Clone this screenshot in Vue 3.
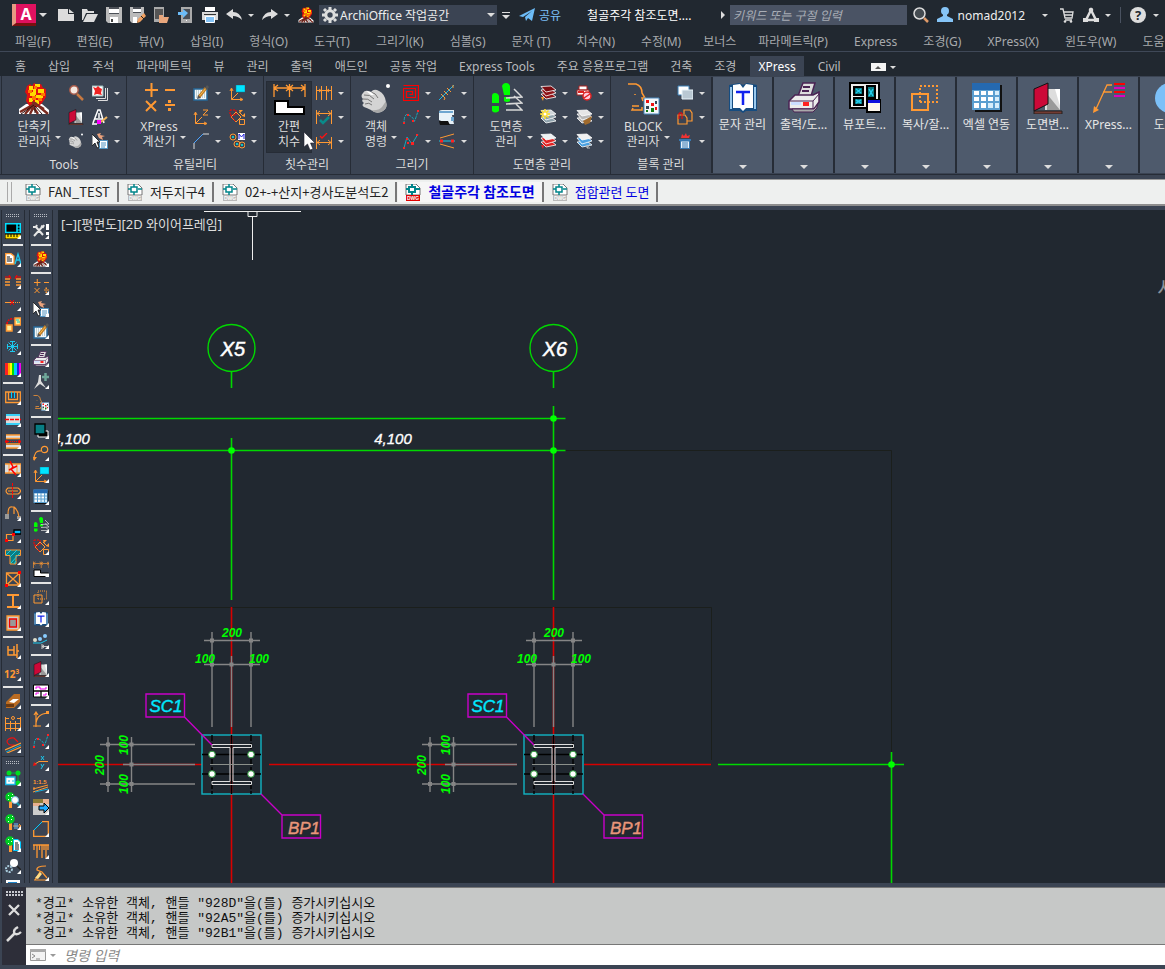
<script setup>
import { ref } from 'vue'

const fire = `
  <path fill="#fff" d="M1 31V26L8 21 24 21 31 27V31Z"/>
  <path fill="#e01010" d="M9 3 12 1 14 3 16 0 20 2 23 1 25 5 28 6 28 14 24 20 20 24H12L8 18 9 12 7 9Z"/>
  <path fill="#fd0" d="M11 3h4v4h-4zM17 1h5v3h-5zM20 6h6v4h-6zM12 9h5v4h-5zM18 12h7v3h-7zM11 15h4v4h-4zM17 17h4v4h-4zM15 6h3v6h-3z"/>
  <path fill="#f70" d="M10 7h4v3h-4zM16 3h3v3h-3zM23 10h4v3h-4zM14 13h4v4h-4zM20 15h4v3h-4z"/>
  <path fill="none" stroke="#7b2b20" stroke-width="2.4" d="M2 29 18 20M7 31 15 22M12 31 17 21M20 31 14 22M30 31 17 20M26 26 14 19"/>
  <path fill="none" stroke="#301010" d="M3 31 16 22M24 31 17 23M17 30V23"/>`
const calc = `<path fill="none" stroke="#f93" stroke-width="2" d="M2 7H15M8.5 0V14M22 7H32M3 18 13 28M13 18 3 28M22 22H32"/><path fill="#f93" d="M25 17h3v3h-3zM25 25h3v3h-3z"/>`
const pencil = `<path fill="#f4f8fb" stroke="#27699b" stroke-width="1.5" d="M1 4H14V15H1Z"/><path fill="none" stroke="#8aa" stroke-dasharray="1 1" d="M3 6H12M3 8H12M3 10H12M3 12H12"/><path stroke="#c27b22" stroke-width="3" d="M6 12 13 3"/><path stroke="#f2bd55" d="M6.5 11 13 3"/><path fill="#555" d="M4 14 5 10 8 13ZM12 3 14 0 16 2 14 5Z"/>`
const cursorList = `<path fill="#eba27c" d="M5 1 9 0 8 2 13 3 10 4 11 7 7 5Z"/><path fill="#fff" stroke="#4f93c2" d="M7.5 7.5H15.5V15.5H7.500Z"/><path stroke="#4f93c2" d="M9 10H14M9 12H14M9 14H13"/><path fill="#fff" stroke="#111" stroke-width=".8" d="M0 1V13L3 10 5 15 7 14 5 9H8Z"/>`
const door = `<path fill="#ddd" d="M13 7H28V28H13Z"/><path fill="#999" d="M28 28 15 12V28Z"/><path fill="#fff" d="M23 7H28V24Z"/><path fill="#733b33" stroke="#222" d="M2 29H30V32H2Z"/><path fill="#cc0838" stroke="#111" d="M2 7 16 1V22L2 29Z"/>`
const table = `<path fill="#111" d="M4 3H31V30H4Z"/><path fill="#5b9fd0" d="M1 1H29V28H1Z"/><path fill="#2569b0" d="M1 1H29V8H1Z"/><path fill="#fff" d="M3 9h5v4H3zM10 9h5v4h-5zM17 9h5v4h-5zM3 15h5v4H3zM10 15h5v4h-5zM17 15h5v4h-5zM3 21h5v5H3zM10 21h5v5h-5z"/><path fill="#d5edfb" d="M24 9h4v4h-4zM24 15h4v4h-4zM17 21h5v5h-5zM24 21h4v5h-4z"/>`
const textBook = `<path fill="#154c80" d="M2 3 12 1 16 3 20 1 30 3V29H19L16 31 13 29H2Z"/><path fill="#9ac9ee" d="M3 5h2v22H3zM27 5h2v22h-2z"/><path fill="#fff" d="M6 3 13 2 16 6 19 2 26 3V26H19L16 29 13 26H6Z"/><path stroke="#12e" stroke-width="2.5" fill="none" d="M9 10H23M16 10V23"/>`
const copyBox = `<path fill="none" stroke="#f93" stroke-width="2" d="M2 12H18V28H2Z"/><path fill="none" stroke="#f93" stroke-width="2" stroke-dasharray="2 2" d="M10 20V4H27V20H10"/>`
const printer = `<path fill="#ddd" stroke="#4b2354" stroke-width="1.5" d="M10 14 15 1H27L23 14Z"/><path fill="none" stroke="#4b2354" stroke-width="2" d="M15 5H22M14 9H21"/><path fill="#ececec" stroke="#4b2354" stroke-width="1.5" d="M1 19 7 13H25L31 10V20L26 27H1Z"/><path fill="#aaa" stroke="#4b2354" d="M4 27H26L29 23V26L25 30H6Z"/><path fill="none" stroke="#4b2354" d="M1 19H25L31 12M25 19V27"/><path fill="#cdf" d="M3 20h10v3H3z"/><path fill="#f22" d="M15 20h6v4h-6z"/>`
const axes = `<path fill="none" stroke="#f93" d="M2.5 4V14.5H13M2.5 14.5 9 8M1 6 2.5 3 4 6M11 13 14 14.5 11 16"/><path fill="#00e5ff" stroke="#087d9a" stroke-width=".5" d="M7 0H16V7H7Z"/>`
const diamond = `<path fill="none" stroke="#f93" d="M2 8 7 3 12 8 7 13ZM10.5 10.5H15.5V15.5H10.5ZM10 3 14 7"/><path fill="#f93" d="M10 1h4l-3 3zM16 8 16 4 13 7z"/><path fill="none" stroke="#f00" stroke-dasharray="2 1" d="M1 1H7V6H1ZM1 6 7 13"/>`
const feet = `<path fill="#0f0" d="M2 13Q2 10 5 10T9 13V20H2ZM2 23H9V28Q5 31 2 28ZM12 3Q13 0 16 0T20 3V12H14ZM14 14H20V18Q17 20 14 18Z"/><path fill="none" stroke="#d8d8d8" stroke-width="1.5" d="M24 6 32 14 16 15M24 13 32 20 16 21M26 21 32 27H16"/>`
const bigDim = `<path fill="none" stroke="#f93" stroke-width="1.3" d="M1 1V14M32 1V14M16.5 1V14M1 5H32M5 2 1 5 5 8M28 2 32 5 28 8M13 2 16.5 5 13 8M20 2 16.5 5 20 8"/><path fill="#fff" stroke="#000" stroke-width="2" d="M2 18H15V24H31V31H2Z"/>`
const face = `<path fill="none" stroke="#f93" stroke-width="1.5" d="M1 1H9Q15 3 15 10L18 15H15L16 18M15 24V27H5L6 25M5 23H12M8 11V12"/><path fill="#f4f7fa" stroke="#4c8bc0" d="M17 15H32V31H17Z"/><path fill="#e11" d="M19 17h3v3h-3zM24 20h3v3h-3zM28 24h2v3h-2z"/><path fill="#345" d="M19 23h3v3h-3zM28 18h2v3h-2z"/><path fill="#171" d="M24 25h3v4h-3zM19 27h2v2h-2z"/>`
const hand = `<path fill="#d4d4d4" d="M3 10Q5 6 11 9 14 5 19 8 25 11 26 19 28 25 23 28 17 32 11 27 7 25 4 24 1 22 4 20 1 18 3 16 0 13 3 10Z"/><path fill="#a8a8a8" d="M26 18Q28 25 23 28 17 32 11 27 18 28 22 24Z"/><path fill="none" stroke="#777" d="M4 12Q10 11 14 16M3 16Q8 15 12 19M5 21Q9 19 12 22M11 9Q16 10 18 15"/><path fill="#fff" d="M6 8 11 9 14 12 11 12Z"/><circle cx="28" cy="3" r="2" fill="#fff"/>`
const miniDim = `<path fill="none" stroke="#f93" d="M.5 1V15M15.5 1V15M1 4.5H15M4 2 1 4.5 4 7M12 2 15 4.5 12 7"/>`
const half = (s) => `<g transform="scale(.5)">${s}</g>`
const spline = `<path fill="none" stroke="#19a8b8" stroke-dasharray="3 1" d="M1 15Q1 3 6 6T11 12 15 2"/><path fill="#f22" d="M0 13h2v2H0zM4 5h2v2H4zM9 11h2v2H9zM14 1h2v2h-2z"/>`
const tree = `<path fill="#f93" d="M4 8h3v8H4z"/><circle cx="5" cy="5" r="4.7" fill="#0c2"/><path fill="#fff" d="M3 3h1v1H3zM6 5h1v1H6zM3 7h1v1H3zM7 2h1v1H7z"/>`
const sheets = (a, b) => `<path fill="${b}" stroke="#fff" stroke-width=".8" d="M1 9 11 8 16 12 6 14Z"/><path fill="${b}" stroke="#fff" stroke-width=".8" d="M1 5 11 4 16 8 6 11Z"/><path fill="${a}" stroke="#fff" stroke-width=".8" d="M1 1.5 11 1 16 5 6 7Z"/>`
const dwg = (c, on) => `<path fill="#fff" stroke="#555" stroke-width=".8" d="M1 0H11L15 4V11H1Z"/><path fill="none" stroke="#00858b" stroke-width="${on ? 2 : 1.5}" d="M1 5H4M11 5H15M7 0V3M7 8V11M4 3H10V8H4Z"/><path fill="${c}" d="M1 11H15V17H1Z"/><text x="8" y="16" fill="#fff" font-size="5" font-weight="700" text-anchor="middle" font-family="Liberation Sans">DWG</text>`

const icons = {
  fire: half(fire),
  calc: half(calc),
  door: half(door),
  table: half(table),
  textBook: half(textBook),
  copyBox: half(copyBox),
  printer: half(printer),
  feet: half(feet),
  bigDim: half(bigDim),
  face: half(face),
  hand: half(hand),
  pencil,
  cursorList,
  axes,
  diamond,
  spline,
  new: `<path fill="#dcdcdc" d="M0 2H10V7H16V14H0Z"/><path fill="#dcdcdc" d="M11 2 16 6H11Z"/>`,
  open: `<path fill="#dcdcdc" d="M0 2H5L6 4H12V6H4L1 13H0Z"/><path fill="#dcdcdc" d="M5 7H16L12 15H1Z"/>`,
  save: `<path fill="#bbb" d="M0 0H16V16H2L0 14Z"/><path fill="#4d5158" d="M3 0H13V7H3Z"/><path fill="#fff" d="M3 2H13V6H3ZM4 10H12V16H4Z"/><path fill="#444" d="M5 12h2v3H5z"/>`,
  saveAs: `<path fill="#bbb" d="M0 0H14V7L6 16H2L0 14Z"/><path fill="#4d5158" d="M3 0H11V6H3Z"/><path fill="#fff" d="M3 2H11V5H3ZM3 10H7V16H3Z"/><path fill="#f0a060" d="M7 16 8 12 14 6 16 9 10 15Z"/><path stroke="#222" fill="none" d="M11 9 14 12"/>`,
  openWeb: `<path fill="#aaa" d="M0 0H10V15H0Z"/><path fill="#555" d="M1 2H9V12H1Z"/><path fill="#e9a77d" d="M5 8H9V10H15L13 16H5Z"/>`,
  saveWeb: `<path fill="#aaa" d="M3 0H14V16H3Z"/><path fill="#4a4f57" d="M5 2H12V12H5Z"/><path fill="#6cbcf8" d="M0 5H5V2L10 6 5 11V8H0Z"/><path fill="#fff" d="M8 13h1v1H8z"/>`,
  print: `<path fill="#fff" d="M3 0H13V4H3Z"/><path fill="#d9d9d9" d="M0 5H16V13H0Z"/><path fill="#333" d="M2 7H14V8H2Z"/><path fill="#85c4f7" stroke="#fff" d="M3.5 9.5H12.5V15.5H3.5Z"/>`,
  undo: `<path fill="#ddd" d="M0 7 7 2V5Q14 5 16 13 12 9 7 9V12Z"/>`,
  redo: `<path fill="#ddd" d="M16 7 9 2V5Q2 5 0 13 4 9 9 9V12Z"/>`,
  gear: `<circle cx="8" cy="8" r="4.2" fill="none" stroke="#ddd" stroke-width="3"/><path stroke="#ddd" stroke-width="3" d="M8 0V3M8 13V16M0 8H3M13 8H16M2 2 4 4M12 12 14 14M14 2 12 4M4 12 2 14"/>`,
  plane: `<path fill="#6cbcf8" d="M0 9 16 1 13 14 9 11 7 14 6 10 13 4 4 10Z"/>`,
  find: `<circle cx="6.5" cy="6.5" r="5.5" fill="#444b51" stroke="#ddd" stroke-width="1.5"/><path stroke="#df9a68" stroke-width="2.5" d="M11 11 15 15"/>`,
  user: `<circle cx="8" cy="4" r="4" fill="#85c4f7"/><path fill="#85c4f7" d="M6 7H10V9L16 12V15H0V12L6 9Z"/>`,
  cart: `<path fill="none" stroke="#ddd" stroke-width="1.3" d="M1 2H4L6 11H13L14 5H5M5 8H14M6 13H13"/><circle cx="6" cy="14.5" r="1.3" fill="#ddd"/><circle cx="12" cy="14.5" r="1.3" fill="#ddd"/>`,
  apps: `<path fill="none" stroke="#ddd" stroke-width="2.5" d="M8 3 3 13H13Z"/><circle cx="8" cy="3" r="2.3" fill="#ddd"/><path fill="#ddd" d="M0 11h5v4H0zM11 11h5v4h-5z"/>`,
  help: `<circle cx="8" cy="8" r="8" fill="#ddd"/><text x="8" y="12.5" text-anchor="middle" font-family="Noto Sans" font-weight="700" font-size="13" fill="#212830">?</text>`,
  lens: `<circle cx="6" cy="5" r="4.2" fill="#f4e8e0" stroke="#a75a4a" stroke-width="1.5"/><path stroke="#c87941" stroke-width="2.5" d="M9 9 15 15"/>`,
  stack: `<path fill="none" stroke="#ddd" d="M6 15.5H15.5V3M4 13.5H13.5V3"/><path fill="#fff" stroke="#9bb" d="M0 1H11V11H0Z"/><path fill="#e22" d="M1 2 4 3 6 1 8 3 10 4 9 8 10 10 5 9 2 10 3 6Z"/>`,
  stamp: `<path fill="none" stroke="#fff" stroke-width="1.5" d="M1 14 6 1H8L12 14M3 10H11M0 15H5M7 4V9"/><path fill="none" stroke="#f0b35b" stroke-width="2" d="M15 8 9 13"/><path fill="#f0f" d="M5 11h4v4H5z"/>`,
  zAxes: `<path fill="none" stroke="#f93" d="M2.5 4V14.5H13M2.5 14.5 9 8M1 6 2.5 3 4 6M11 13 14 14.5 11 16M10 1H15L10 6H15"/>`,
  chamfer: `<path fill="none" stroke="#ddd" d="M1 16V10M10 1H16"/><path stroke="#4aa3ff" fill="none" d="M1 10 10 1"/>`,
  match: `<g fill="none" stroke="#f93"><circle cx="4" cy="4" r="3"/><circle cx="8" cy="11" r="3"/><circle cx="13" cy="12" r="3"/></g><path stroke="#0ee" d="M3 4H5M4 3V5M7 11H9M8 10V12M12 12H14M13 11V13"/><path fill="#fff" d="M9 0h7v7H9z"/><path fill="none" stroke="#22d" d="M10 6V1L12.5 4 15 1V6"/>`,
  dim3: `<path fill="none" stroke="#f93" d="M.5 1V15M5.5 1V15M10.500 1V15M15.5 1V15M1 5.5H15M3 4 5 5.5 3 7M13 4 11 5.5 13 7"/>`,
  dimOk: `${miniDim}<path fill="none" stroke="#0a8a8a" stroke-width="2.5" d="M4 11 7 14 13 8"/>`,
  dimRed: `<path fill="none" stroke="#f93" d="M.5 4V16M15.5 4V16M1 9.5H15M4 7 1 9.5 4 12M12 7 15 9.5 12 12"/><path fill="none" stroke="#f11" stroke-width="1.3" d="M4 3 6 5 11 0"/>`,
  maze: `<path fill="none" stroke="#f00" stroke-width="1.2" d="M.5.5H15.500V15.500H.5V3.500H12.500V12.500H3.500V6.500H9.500V9.500H6.500"/>`,
  trimX: `<path stroke="#19b8e8" d="M0 15 15 0"/><path stroke="#f93" d="M2 9 6 13M5 6 9 10M8 3 12 7M6 13 5 15M14 0V3"/>`,
  scroll: `<path fill="#e8f2f8" d="M0 3Q0 1 3 1H15V6H13L14 11 15 15H9L0 11Z"/><path fill="#111" d="M0 12H9L11 16H1Z"/><path fill="#6ea6d0" d="M0 2H14V4H0ZM12 8h3v4h-3z"/>`,
  splineB: `<path fill="none" stroke="#19a8b8" d="M1 15 4 4 9 11 15 1"/><path fill="#f22" d="M0 14h2v2H0zM3 5h2v2H3zM8 9h3v3H8zM13 1h2v2h-2zM4 9h2v2H4z"/>`,
  wedge: `<path fill="none" stroke="#f93" d="M1 5 15 1M1 11 15 15"/><path stroke="#19c8e8" d="M0 8H16"/><path fill="#f22" d="M1 6.5h3v3H1zM12 6.5h3v3h-3z"/>`,
  layerRed: sheets('#7d0d12', '#8f1418') + `<path fill="#f93" d="M1 12h3l-1 4z"/>`,
  layerRed2: sheets('#eef2f4', '#e22222') + `<path fill="#e22" d="M1 12h3l-1 4z"/>`,
  layerSun: sheets('#cfd6da', '#8fa3ad') + `<path stroke="#fd2" stroke-width="1.5" d="M5 0V10M0 5H10M1.500 1.500 8.500 8.500M8.500 1.500 1.500 8.500"/><circle cx="5" cy="5" r="1.500" fill="#fff"/>`,
  layerBrush: sheets('#e6e6e6', '#b8b8b8') + `<path fill="#a06a2c" d="M16 7 14 14 9 16 7 12Z"/>`,
  layerBlue: sheets('#f2f2f2', '#4aa0e0') + `<path stroke="#bbb" fill="none" d="M15 10 11 15M11 12V15H14"/>`,
  noPrint: `<path fill="#fff" stroke="#a22" d="M3 1H11V5H3ZM1 5H13V10H1Z"/><path fill="#d22" d="M2 6h6v2H2z"/><circle cx="11" cy="11" r="4" fill="#fcd" stroke="#d22" stroke-width="1.5"/><path stroke="#d22" stroke-width="1.5" d="M8 13 14 9"/>`,
  overlap: `<path fill="#fff" stroke="#3b7fb5" d="M1 1H12V10H1Z"/><path fill="#b9c8d3" stroke="#e9f4fa" d="M5 5H16V14H5Z"/>`,
  pasteBlk: `<path fill="none" stroke="#f93" stroke-width="1.2" d="M7 5V1H13L15 4V12H10M1 6H8L10 9V15H1Z"/><path fill="none" stroke="#f00" d="M2 10V4H5V10"/>`,
  trash: `<path fill="#3778b0" d="M2 6H14V8H2Z"/><path fill="#e8f2fa" stroke="#3778b0" d="M3.5 8H12.5V15.5H3.5Z"/><path stroke="#3778b0" d="M6 9V15M8 9V15M10 9V15"/><path fill="#e33" d="M5 1 7 3 9 0 10 3 13 2 12 5H4Z"/>`,
  monitor: `<path fill="#000" stroke="#00e0ff" stroke-width="1.5" d="M.7.7H15.3V9.5H.7ZM12 1V9"/><path stroke="#00e0ff" d="M12 4H15M12 7H15"/><path fill="#fd0" stroke="#000" d="M0 11H16V16H0Z"/><path stroke="#000" d="M3 11V14M6 11V14M9 11V14M12 11V14"/>`,
  docA: `<path fill="#fff" stroke="#f93" stroke-width="1.3" d="M.7 2.7H6L9 5V13H.7Z"/><path stroke="#111" d="M2 6H5M2 8H7M2 10H7"/><path fill="none" stroke="#1cc8ee" stroke-width="1.3" d="M10 13 13 3 16 13M11 9H15"/>`,
  mergeL: `<path stroke="#f93" stroke-width="1.5" d="M0 6H5M0 9H5M0 12H5M11 6H16M11 9H16M11 12H16"/><path stroke="#f00" d="M0 4H6M10 4H16M4 2 6 6M12 2 10 6"/>`,
  cutLine: `<path stroke="#f93" d="M0 7.5H8"/><path stroke="#f93" stroke-dasharray="1 1" d="M8 7.5H16"/><path stroke="#f00" d="M5 5 9 10M9 5 5 10"/>`,
  swapBlk: `<path fill="#fe9" stroke="#f93" stroke-width="1.5" d="M10 1H15.5V8H10ZM1.5 8H7V14H1.5Z"/><path fill="none" stroke="#f00" stroke-width="1.5" stroke-dasharray="2 1" d="M2 7Q3 1 9 2"/><path stroke="#0cc" d="M11 3H14M12 5H15"/>`,
  snow: `<path stroke="#1cc8ee" fill="none" d="M7.5 2V13M2 7.5H13M3.5 3.5 11.5 11.5M11.5 3.5 3.5 11.5M5 2.5H10M5 12.5H10M2.5 5V10M12.5 5V10"/>`,
  bars: `<path fill="#f22" d="M0 2h3v12H0z"/><path fill="#fa0" d="M3 2h2v12H3z"/><path fill="#ff0" d="M5 2h2v12H5z"/><path fill="#0d0" d="M7 2h2v12H7z"/><path fill="#0cf" d="M9 2h3v12H9z"/><path fill="#22d" d="M12 2h2v12h-2z"/><path fill="#e0e" d="M14 2h2v12h-2z"/>`,
  comb: `<path fill="none" stroke="#f93" stroke-width="1.3" d="M.7 3H15.3V13.5H.7ZM3.5 3V10.5H12.5V3"/><path stroke="#0cf" d="M6.5 3V9M9.5 3V9"/>`,
  band: `<path fill="#ddd" d="M1 3h14v11H1z"/><path stroke="#0cf" stroke-width="1.5" d="M1 4H15M1 13H15"/><path stroke="#f00" stroke-width="1.5" stroke-dasharray="4 1" d="M0 8.5H16"/>`,
  band2: `<path fill="#ddd" d="M1 2h14v3H1zM1 12h14v3H1z"/><path stroke="#f93" stroke-width="1.5" d="M1 2H15M1 5.5H15M1 11H15M1 15H15"/><path stroke="#f00" stroke-dasharray="1 1" d="M3 8.5H13"/><circle cx="1.5" cy="8.5" r="1.5" fill="#f00"/><circle cx="14.5" cy="8.5" r="1.5" fill="#f00"/>`,
  crack: `<path fill="#ddd" stroke="#f93" stroke-width="1.3" d="M0 3H16V12H0"/><path stroke="#f93" d="M4 3V12M12 3V12"/><path stroke="#f00" stroke-width="1.5" fill="none" d="M5 0 8 6 6 8 11 14M4 9 12 5"/>`,
  lensCut: `<path fill="none" stroke="#f93" stroke-width="1.2" d="M3 5H13Q18 8 13 11H3Q-1 8 3 5ZM3 8H13"/><path stroke="#f00" stroke-dasharray="3 1" d="M7.5 0V16"/>`,
  arch: `<path fill="#999" d="M0 9h4v5H0zM12 11h4v3h-4z"/><path fill="none" stroke="#f93" stroke-width="1.2" d="M3 9Q3 1 7 2H9V9M9 2Q13 5 14 12"/>`,
  linkSq: `<path fill="none" stroke="#f93" stroke-width="1.2" d="M1.5 7.5H8V13.5H1.5Z"/><path fill="#0bf" stroke="#000" stroke-width="1.3" d="M9 3H16V7H9Z"/><path fill="#f00" d="M0 12h3v3H0zM7 6h3v3H7z"/>`,
  hatch: `<path fill="#087d84" stroke="#f93" d="M.5 1H15.5V6.5H11V15H5V6.5H.5Z"/><path stroke="#2cd" d="M1 6 6 1M5 8 12 1M6 14 15 4M9 15 11 12"/>`,
  xBox: `<path fill="none" stroke="#f93" stroke-width="1.3" d="M1.5 2H14.5V14H1.5ZM1.5 2 14.5 14M14.5 2 1.5 14"/><path fill="#f00" d="M13 0h3v3h-3zM0 13h3v3H0z"/>`,
  iBeam: `<path stroke="#f93" stroke-width="2" fill="none" d="M2 2H14M2 14H14M8 2V14"/>`,
  column: `<path fill="#ccc" stroke="#f93" stroke-width="1.3" d="M2 1H14V15H2Z"/><path fill="#999" stroke="#e00" stroke-width="1.3" d="M4.5 4H11.5V12H4.5Z"/>`,
  seat: `<path fill="none" stroke="#f93" stroke-width="1.5" d="M3 3V12H9V3M3 7H9M12 1V15M12 8H14M12 12H9"/>`,
  num: `<text x="-1" y="13" font-family="Noto Sans" font-weight="700" font-size="10" fill="#f93">12³</text>`,
  bed: `<path fill="#bb6c22" d="M1 9 7 3 9 1H15V9L9 15H1Z"/><path fill="#fff" d="M4 9 8 6H14L9 10Z"/><path fill="#6d3a10" d="M1 11h8v3H1z"/>`,
  dims2: `<path fill="none" stroke="#f93" d="M.5 2V16M5.5 6V16M10.5 6V16M15.5 2V16M0 8.5H16M0 13.5H16M1 3.5H4M12 3.5H15"/><circle cx="8" cy="3" r="1.5" fill="none" stroke="#f93"/>`,
  loop: `<path fill="none" stroke="#e11" stroke-width="1.2" d="M10 8Q2 9 2 4 4 0 9 1L13 5"/><path stroke="#f93" stroke-width="1.2" d="M0 13 16 6M2 16 16 10"/><path stroke="#1ad" d="M1 15 16 8"/>`,
  nodes: `<path fill="none" stroke="#0a4" d="M4 3H13V13"/><g fill="#0d2"><circle cx="4" cy="3" r="2.5"/><circle cx="13" cy="3" r="2.5"/><circle cx="13" cy="13" r="2.5"/></g><path fill="#fff" stroke="#19b8e8" stroke-width="1.3" d="M.7 7H10V14.5H.7Z"/><path stroke="#19b8e8" d="M3 11H5M7 11H9"/>`,
  treeFind: `${tree}<circle cx="10" cy="8" r="3.5" fill="#fff" stroke="#7bd" /><path stroke="#19a" stroke-width="2" d="M12 11 15 14"/>`,
  treeDim: `${tree}<path fill="none" stroke="#f93" d="M8 12H16M14 10 16 12 14 14"/><path stroke="#6bf" d="M10 9V15M12 9V15"/>`,
  treeDoc: `${tree}<path fill="#fff" stroke="#00c8ff" d="M8.5 3.5H13L15.5 6V14.5H8.5Z"/><path stroke="#111" d="M10 7H13M10 9H14M10 11H14M10 13H14"/>`,
  gearFind: `<circle cx="9" cy="5" r="4" fill="#fff"/><path stroke="#222" stroke-width="1.5" d="M12 8 16 12"/><circle cx="4" cy="11" r="3" fill="none" stroke="#acd" stroke-width="2" stroke-dasharray="2 1"/>`,
  sheet: `<path fill="#fff" d="M1 0H15V16H1Z"/><path stroke="#28c" stroke-width="2" d="M3 3H12"/>`,
  tools: `<path fill="none" stroke="#e6e6e6" stroke-width="2" d="M1 13 10 3M3 4 10 12M0 4 3 4 4 2M8 3 10 4 11 2"/><path fill="#fff" d="M13 1h3v6h-3zM13 9h3v3h-3z"/>`,
  compass: `<path fill="#ddd" d="M6 2 8 2 8 8 13 15 7 11 1 16 5 9Z"/><path stroke="#6fa699" stroke-width="2.5" d="M9 4H16M12.5 0V8"/>`,
  squares: `<path fill="#000" stroke="#fff" d="M5 8H15V14H5Z"/><path fill="#087d84" stroke="#000" stroke-width="1.3" d="M2 1H12V11H2Z"/>`,
  leaderO: `<path fill="none" stroke="#f93" stroke-width="1.2" d="M1 15Q1 5 8 6"/><circle cx="11.5" cy="4.5" r="3.2" fill="none" stroke="#f93" stroke-width="1.2"/><path fill="#f93" d="M0 12h4l-3 4z"/>`,
  stones: `<circle cx="2" cy="7" r="2" fill="#ddc"/><circle cx="7" cy="6" r="2" fill="#8cf"/><circle cx="12" cy="3" r="2" fill="#8cf"/><path fill="none" stroke="#1cc8ee" d="M0 10H8L14 7"/><path stroke="#ccc" fill="none" d="M9 11V16M9 13.5H15M11 12 9 13.5 11 15"/>`,
  grid: `<path fill="#fff" stroke="#000" d="M.5 2H15.5V14H.5Z"/><path stroke="#000" stroke-width="1.3" d="M0 8H16M8 8V14"/><path fill="none" stroke="#e0e" d="M3 6V4H7V6H13V4M3 12V10H6M10 12H13V10"/>`,
  arc: `<path fill="none" stroke="#f93" stroke-width="1.2" d="M3 16Q2 3 15 2M0 15H8M3 1V15M1 4 3 1 5 4"/><path fill="#f93" d="M13 0h3v3h-3z"/>`,
  ratioXY: `<path stroke="#f93" fill="none" d="M2 9 6 6.500H15"/><path fill="#e11" d="M0 11 1 7 4 10z"/><path stroke="#1cc8ee" d="M8 1 11 5M11 1 8 5M8 9 9.500 12M11 9 8 14"/>`,
  slope: `<text x="0" y="7" font-size="6" font-weight="700" fill="#f93" font-family="Liberation Sans">1:1.5</text><path stroke="#f93" fill="none" d="M0 12 15 8M0 15 15 10M1 10V13"/><path stroke="#1ad" d="M2 15 15 12"/>`,
  imgArrow: `<path fill="#ccc" d="M0 0h16v16H0z"/><path fill="#8b7a35" d="M0 0h10v4H0z"/><path fill="#e9b090" d="M10 0h6v5h-6zM0 4h7v3H0z"/><path fill="#2af" stroke="#000" d="M6 7H11V4L16 9 11 14V11H6Z"/>`,
  chamferBox: `<path fill="none" stroke="#f93" stroke-width="1.3" d="M9 .7H15.3V15.3H.7V9"/><path stroke="#0cf" d="M1 9 9 1"/>`,
  rake: `<path fill="none" stroke="#f93" stroke-width="1.3" d="M0 2H16M1 2V7M4 2V15M6.5 2V7M9 2V15M11 2V7M13 2V15M15 2V7"/>`,
  sketch: `<path fill="none" stroke="#f93" stroke-width="1.2" d="M13 1Q3 1 4 5L9 7 14 13M1 15H14M2 15 7 7"/><path fill="#fd8" d="M2 13 7 7 9 9 5 14z"/>`,
  wrench: `<path fill="none" stroke="#ddd" stroke-width="2.5" d="M1 15 9 7"/><path fill="none" stroke="#ddd" stroke-width="2.3" d="M9 3Q7 6 9 8 12 9 15 6M9 3 12 1"/>`,
  close: `<path stroke="#ddd" stroke-width="2.3" d="M3 3 13 13M13 3 3 13"/>`,
  prompt: `<path fill="#f3f3f3" stroke="#999" d="M.5 2.5H15.5V13.5H.5Z"/><path fill="#aaa" d="M0 2h16v3H0z"/><path fill="none" stroke="#888" d="M2 7 5 9 2 11M6 12H10"/>`,
}

const bigIcons = {
  fire, calc, bigDim, hand, feet, face, textBook, printer, copyBox, table, door,
  viewport: `<path fill="#eee" stroke="#000" stroke-width="2" d="M1 1H30V26H1Z"/><path fill="#0a7880" stroke="#000" stroke-width="2" d="M5 5H14V13H5ZM5 16H14V23H5ZM18 4H26V16H18Z"/><path stroke="#2ce" stroke-width="1.5" d="M7 7 12 11M12 7 7 11M7 18 12 21M12 18 7 21M20 7 24 14M24 7 20 14"/><path fill="#fff8ee" stroke="#000" stroke-width="2" d="M18 18H32V30H18Z"/><path fill="#11d" d="M19 18h12v3H19z"/>`,
  leader: `<path fill="none" stroke="#f93" stroke-width="1.3" d="M3 27 14 3H19M10 10H19"/><path fill="#f93" d="M0 31 1 24 6 28z"/><path stroke="#f00" stroke-width="2" d="M21 2H32M21 10H32"/><path stroke="#e000c0" stroke-width="2" d="M21 6H32M21 14H32"/>`,
  globe: `<circle cx="16" cy="16" r="15" fill="#7cc0f8"/>`,
}

const quickTools = ['new', 'open', 'save', 'saveAs', 'openWeb', 'saveWeb', 'print']

const menus = [
  '파일(F)', '편집(E)', '뷰(V)', '삽입(I)', '형식(O)', '도구(T)', '그리기(K)', '심볼(S)', '문자 (T)',
  '치수(N)', '수정(M)', '보너스', '파라메트릭(P)', 'Express', '조경(G)', 'XPress(X)', '윈도우(W)', '도움말(H)',
]

const ribbonTabs = [
  '홈', '삽입', '주석', '파라메트릭', '뷰', '관리', '출력', '애드인', '공동 작업',
  'Express Tools', '주요 응용프로그램', '건축', '조경', 'XPress', 'Civil',
]
const activeTab = ref('XPress')

const panels = [
  { title: 'Tools', icon: 'fire', lines: ['단축키', '관리자'], plain: ['lens', 'door', 'hand'], cols: [['stack', 'stamp', 'cursorList']] },
  { title: '유틸리티', icon: 'calc', lines: ['XPress', '계산기'], cols: [['pencil', 'zAxes', 'chamfer'], ['axes', 'diamond', 'match']] },
  { title: '칫수관리', icon: 'bigDim', lines: ['간편', '치수'], narrow: true, hover: true, cols: [['dim3', 'dimOk', 'dimRed']] },
  { title: '그리기', icon: 'hand', lines: ['객체', '명령'], narrow: true, cols: [['maze', 'spline', 'splineB'], ['trimX', 'scroll', 'wedge']] },
  { title: '도면층 관리', icon: 'feet', lines: ['도면층', '관리'], cols: [['layerRed', 'layerSun', 'layerRed2'], ['noPrint', 'layerBrush', 'layerBlue']] },
  { title: '블록 관리', icon: 'face', lines: ['BLOCK', '관리자'], cols: [['overlap', 'pasteBlk', 'trash']] },
]

const folded = [
  { label: '문자 관리', icon: 'textBook' },
  { label: '출력/도...', icon: 'printer' },
  { label: '뷰포트...', icon: 'viewport' },
  { label: '복사/잘...', icon: 'copyBox' },
  { label: '엑셀 연동', icon: 'table' },
  { label: '도면변...', icon: 'door' },
  { label: 'XPress...', icon: 'leader' },
  { label: '도구...', icon: 'globe' },
]

const docs = ref([
  { name: 'FAN_TEST' },
  { name: '저두지구4' },
  { name: '02+-+산지+경사도분석도2' },
  { name: '철골주각 참조도면', active: true },
  { name: '접합관련 도면', changed: true },
])

// '-' is a separator
const toolbars = [
  [
    ['monitor', '-', 'docA', 'mergeL', 'cutLine', 'swapBlk', 'snow', 'bars', '-', 'comb', 'band', 'band2', '-',
      'crack', 'lensCut', 'arch', 'linkSq', 'hatch', 'xBox', 'iBeam', 'column', '-', 'seat', 'num', '-', 'bed', 'dims2', 'loop'],
    ['nodes', 'treeFind', 'treeDim', 'treeDoc', 'gearFind', 'sheet'],
  ],
  [
    ['tools', '-', 'fire', '-', 'calc', 'cursorList', 'pencil', '-', 'printer', 'compass', 'face', '-',
      'squares', 'leaderO', 'axes', 'table', '-', 'feet', 'diamond', 'bigDim', '-', 'copyBox', 'textBook', 'stones', '-',
      'door', 'grid', '-', 'arc', 'spline', 'ratioXY', 'slope', 'imgArrow', 'chamferBox', 'rake', 'sketch'],
  ],
]

const columns = [
  { name: 'X5', dx: 0 },
  { name: 'X6', dx: 322 },
]
const bolts = [[212, 754.5], [251, 754.5], [212, 774], [251, 774]]
const dimDots = [
  [212, 640.5], [251, 640.5], [212, 664.5], [231.5, 664.5], [251, 664.5],
  [108, 744.5], [108, 784], [131.5, 744.5], [131.5, 764.5], [131.5, 784],
]

const handles = ['928D', '92A5', '92B1']
const command = ref('')
const search = ref('')
const workspace = ref('archi')
</script>

<template>
  <div class="cad">
    <header class="titlebar">
      <button class="logo" aria-label="menu"><span>A</span></button>
      <i class="arrow logo-arrow"></i>
      <button v-for="name in quickTools" :key="name" class="tool" :aria-label="name">
        <svg viewBox="0 0 16 16" v-html="icons[name]"></svg>
      </button>
      <button class="tool step" aria-label="undo"><svg viewBox="0 0 16 16" v-html="icons.undo"></svg></button>
      <i class="arrow small"></i>
      <button class="tool step redo" aria-label="redo"><svg viewBox="0 0 16 16" v-html="icons.redo"></svg></button>
      <i class="arrow small"></i>
      <button class="tool hot" aria-label="fire"><svg viewBox="0 0 16 16" v-html="icons.fire"></svg></button>
      <div class="workspace-select">
        <svg viewBox="0 0 16 16" v-html="icons.gear"></svg>
        <select v-model="workspace" aria-label="workspace">
          <option value="archi">ArchiOffice 작업공간</option>
        </select>
        <i class="arrow"></i>
      </div>
      <i class="arrow barred"></i>
      <button class="share">
        <svg viewBox="0 0 16 16" v-html="icons.plane"></svg>
        공유
      </button>
      <span class="file-name">철골주각 참조도면....</span>
      <i class="arrow-right"></i>
      <input v-model="search" class="search" type="text" placeholder="키워드 또는 구절 입력" aria-label="search" />
      <button class="tool" aria-label="find"><svg viewBox="0 0 16 16" v-html="icons.find"></svg></button>
      <button class="user">
        <svg viewBox="0 0 16 16" v-html="icons.user"></svg>
        <span>nomad2012</span>
        <i class="arrow small"></i>
      </button>
      <button class="tool cart" aria-label="cart"><svg viewBox="0 0 16 16" v-html="icons.cart"></svg></button>
      <button class="tool apps" aria-label="apps"><svg viewBox="0 0 16 16" v-html="icons.apps"></svg></button>
      <i class="arrow small"></i>
      <button class="tool help" aria-label="help"><svg viewBox="0 0 16 16" v-html="icons.help"></svg></button>
      <i class="arrow small"></i>
    </header>

    <nav class="menubar">
      <a v-for="m in menus" :key="m" href="#" :class="{ tight: m === '보너스' }">{{ m }}</a>
    </nav>

    <nav class="ribbon-tabs">
      <button v-for="t in ribbonTabs" :key="t" :class="{ active: t === activeTab }" @click="activeTab = t">{{ t }}</button>
      <span class="fold"><i class="fold-box"></i><i class="arrow small"></i></span>
    </nav>

    <section class="ribbon">
      <div v-for="p in panels" :key="p.title" class="panel">
        <div class="panel-body">
          <button class="big" :class="{ narrow: p.narrow, hover: p.hover }">
            <svg viewBox="0 0 33 32" v-html="bigIcons[p.icon]"></svg>
            <span v-for="l in p.lines" :key="l">{{ l }}</span>
            <i v-if="!p.hover" class="arrow small"></i>
            <svg v-else class="pointer" viewBox="0 0 12 20">
              <path fill="#fff" stroke="#223" stroke-width=".6" d="M1 1V16L4.5 13 7 19 10 18 7.5 12H12Z" />
            </svg>
          </button>
          <div v-if="p.plain" class="col">
            <button v-for="name in p.plain" :key="name" class="mini plain" :aria-label="name">
              <svg viewBox="0 0 16 16" v-html="icons[name]"></svg>
            </button>
          </div>
          <div v-for="(c, i) in p.cols" :key="i" class="col">
            <button v-for="name in c" :key="name" class="mini" :aria-label="name">
              <svg viewBox="0 0 16 16" v-html="icons[name]"></svg>
              <i class="arrow small"></i>
            </button>
          </div>
        </div>
        <div class="panel-title">{{ p.title }}</div>
      </div>
      <button v-for="f in folded" :key="f.label" class="folded">
        <svg viewBox="0 0 32 32" v-html="bigIcons[f.icon]"></svg>
        <span>{{ f.label }}</span>
        <i class="arrow"></i>
      </button>
    </section>

    <nav class="doc-tabs">
      <i class="doc-grip"></i>
      <button v-for="d in docs" :key="d.name" :class="{ active: d.active, changed: d.changed }">
        <svg viewBox="0 0 16 17" v-html="dwg(d.active ? '#e00000' : '#b8b8b8', d.active)"></svg>
        <span>{{ d.name }}</span>
      </button>
    </nav>

    <main class="work">
      <aside class="side">
        <div v-for="(col, i) in toolbars" :key="i" class="side-col">
          <div v-for="(bar, j) in col" :key="j" class="toolbar">
            <i class="grip"></i>
            <template v-for="(name, k) in bar" :key="k">
              <hr v-if="name === '-'" />
              <button v-else :aria-label="name"><svg viewBox="0 0 16 16" v-html="icons[name]"></svg></button>
            </template>
          </div>
        </div>
      </aside>

      <div class="model">
        <svg class="drawing">
          <g transform="translate(-58 -210)">
            <!-- faint sheet outlines -->
            <path class="faint" d="M565 450.5H891.5V752M58 607.5H711.5V760" />

            <!-- grid dimension lines -->
            <path class="grid" d="M58 418.5H565.5M58 450.5H565.5M553.5 406V438" />
            <path class="grid" d="M718 764.5H904M891.5 752V884" />
            <circle class="node" cx="553.5" cy="418.5" r="3.3" />
            <circle class="node" cx="891.5" cy="764.5" r="3.3" />
            <text class="dim-big" x="71" y="444">4,100</text>
            <text class="dim-big" x="393" y="444">4,100</text>

            <path class="center" d="M58 764.5H202M269 764.5H517M584 764.5H711" />

            <g v-for="c in columns" :key="c.name" :transform="`translate(${c.dx} 0)`">
              <circle class="bubble" cx="231.5" cy="348" r="23.5" />
              <text class="bubble-text" x="233" y="356">{{ c.name }}</text>
              <path class="grid" d="M231.5 372V388M231.5 438V600" />
              <circle class="node" cx="231.5" cy="450.5" r="3.3" />
              <path class="center" d="M231.5 607V884" />

              <path class="dim" d="M204 640.5H260M204 664.5H260M212 632V727M251 632V727M231.5 656V727" />
              <path class="dim" d="M100 744.5H195M100 784H195M123 764.5H195M108 737V792M131.5 737V792" />
              <rect v-for="(d, i) in dimDots" :key="i" class="dim-dot" :x="d[0] - 2" :y="d[1] - 2" width="4" height="4" />
              <text class="dim-text" x="232" y="637">200</text>
              <text class="dim-text" x="205" y="663">100</text>
              <text class="dim-text" x="259" y="663">100</text>
              <text class="dim-text" transform="translate(104 765) rotate(-90)">200</text>
              <text class="dim-text" transform="translate(128 745) rotate(-90)">100</text>
              <text class="dim-text" transform="translate(128 784) rotate(-90)">100</text>

              <rect class="plate" x="202" y="735" width="59" height="59" />
              <path class="black" d="M202 754.5H261M202 774H261M231.5 735V794" />
              <path class="black dash" d="M212 735V794M251 735V794" />
              <path class="steel" d="M212 744.5H251.5V747.5H233V781.5H251.5V784.5H212V781.5H230V747.5H212Z" />
              <path class="web" d="M210 764.5H253" />
              <circle v-for="(b, i) in bolts" :key="i" class="bolt" :cx="b[0]" :cy="b[1]" r="3.3" />

              <path class="tag" d="M146 694H184.5V717H146ZM184.5 717 212 745M282 815H320.5V838H282ZM261 794 282 815" />
              <text class="tag-text sc" x="166" y="712">SC1</text>
              <text class="tag-text bp" x="304" y="834">BP1</text>
            </g>

            <!-- crosshair -->
            <path class="cross" d="M204 211.5H301M248 211.5V216.5H257V211.5M252.5 217V260" />
            <text class="cube" x="1157" y="296">서</text>
          </g>
        </svg>
        <div class="view-label">[−][평면도][2D 와이어프레임]</div>
      </div>
    </main>

    <footer class="command">
      <div class="command-side">
        <i class="grip"></i>
        <button aria-label="close"><svg viewBox="0 0 16 16" v-html="icons.close"></svg></button>
        <button aria-label="settings"><svg viewBox="0 0 16 16" v-html="icons.wrench"></svg></button>
      </div>
      <div class="command-main">
        <div class="history">
          <p v-for="h in handles" :key="h">*경고* 소유한 객체, 핸들 "{{ h }}"을(를) 증가시키십시오</p>
        </div>
        <div class="prompt">
          <svg viewBox="0 0 16 16" v-html="icons.prompt"></svg>
          <i class="arrow small"></i>
          <input v-model="command" type="text" placeholder="명령 입력" aria-label="command" />
        </div>
      </div>
    </footer>
  </div>
</template>

<style>
body {
  margin: 0;
  background: #212830;
}
</style>

<style scoped>
.cad {
  display: flex;
  flex-direction: column;
  height: 100vh;
  overflow: hidden;
  background: #212830;
  color: #ddd;
  font-family: 'Noto Sans', 'Noto Sans CJK KR', sans-serif;
  font-size: 12px;
  line-height: 15px;
}

.cad *,
.cad *::after {
  box-sizing: border-box;
}

button,
input,
select {
  padding: 0;
  border: 0;
  background: none;
  color: inherit;
  font: inherit;
}

svg {
  display: block;
  flex: none;
  width: 16px;
  height: 16px;
}

.arrow {
  flex: none;
  border: 4px solid transparent;
  border-top-color: #ddd;
  border-bottom: 0;
}

.arrow.small {
  border-width: 3px;
  border-bottom: 0;
}

/* title bar */
.titlebar {
  display: flex;
  flex: none;
  align-items: center;
  height: 30px;
  padding: 0 6px 0 12px;
  white-space: nowrap;
}

.logo {
  width: 24px;
  height: 22px;
  border-left: 4px solid #e79a82;
  border-bottom: 3px solid #7a1010;
  background: #e0115f;
  color: #fff;
  font-size: 16px;
  font-weight: 700;
  line-height: 18px;
}

.logo-arrow {
  margin: 0 11px 0 3px;
}

.tool {
  flex: none;
  margin-right: 8px;
}

.step {
  margin-right: 6px;
}

.redo {
  margin-left: 8px;
}

.hot {
  margin: 0 5px 0 8px;
}

.workspace-select {
  display: flex;
  flex: none;
  align-items: center;
  gap: 2px;
  width: 178px;
  height: 20px;
  padding: 0 2px 0 3px;
  background: #3b4453;
}

.workspace-select select {
  flex: 1;
  min-width: 0;
  appearance: none;
  color: #eee;
}

.barred {
  position: relative;
  margin: 3px 9px 0 5px;
}

.barred::after {
  content: '';
  position: absolute;
  top: -7px;
  left: -4px;
  width: 8px;
  height: 1px;
  background: #ddd;
}

.share {
  display: flex;
  flex: none;
  gap: 4px;
  align-items: center;
  margin-right: 26px;
  color: #7cc0f8;
}

.file-name {
  flex: none;
  width: 134px;
  color: #fff;
}

.arrow-right {
  border: 4px solid transparent;
  border-left-color: #ddd;
  border-right: 0;
  margin-right: 5px;
}

.search {
  flex: 1;
  min-width: 60px;
  height: 20px;
  margin-right: 6px;
  padding: 0 3px;
  background: #4a5364;
  color: #fff;
}

.search::placeholder {
  color: #a9aeb6;
  font-style: italic;
  opacity: 1;
}

.user {
  display: flex;
  flex: none;
  align-items: center;
  gap: 5px;
  margin-right: 11px;
  color: #eee;
}

.user .arrow {
  margin-left: 12px;
}

.cart {
  margin-right: 8px;
}

.apps {
  margin-right: 6px;
}

.help {
  margin: 0 7px 0 9px;
  padding-left: 9px;
  border-left: 1px solid #4a5260;
}

/* menus and tabs */
.menubar {
  display: flex;
  flex: none;
  gap: 26px;
  height: 22px;
  padding: 4px 0 0 15px;
  border-bottom: 1px solid #3f4857;
  overflow: hidden;
  white-space: nowrap;
}

.menubar a {
  flex: none;
  color: #a8aaad;
  text-decoration: none;
}

.menubar .tight {
  margin: 0 -4px;
}

.ribbon-tabs {
  display: flex;
  flex: none;
  align-items: flex-end;
  gap: 6px;
  height: 24px;
  padding-left: 7px;
  white-space: nowrap;
}

.ribbon-tabs button {
  flex: none;
  height: 20px;
  padding: 0 8px;
  color: #b9bbbe;
}

.ribbon-tabs .active {
  background: #3b4453;
  color: #fff;
}

.fold {
  display: flex;
  align-items: center;
  gap: 4px;
  height: 18px;
  margin-left: 16px;
}

.fold-box {
  display: flex;
  align-items: center;
  justify-content: center;
  width: 15px;
  height: 8px;
  background: #f4f4f4;
}

.fold-box::after {
  content: '';
  border: 3px solid transparent;
  border-bottom-color: #555;
  border-top: 0;
}

/* ribbon */
.ribbon {
  display: flex;
  flex: none;
  height: 99px;
  padding-left: 1px;
  border-bottom: 1px solid #262c36;
  background: #3b4453;
  overflow: hidden;
}

.panel {
  flex: none;
  border-left: 1px solid #262c36;
}

.panel-body {
  display: flex;
  height: 78px;
  padding-top: 5px;
}

.panel-title {
  padding-top: 3px;
  text-align: center;
}

.big {
  position: relative;
  display: flex;
  flex-direction: column;
  align-items: center;
  width: 64px;
  height: 72px;
  padding-top: 2px;
}

.big.narrow {
  width: 46px;
  margin: 0 2px;
}

.big.hover {
  background: #2b323c;
  box-shadow: inset 0 0 0 1px #262c36;
}

.big > svg:first-child {
  width: 33px;
  height: 32px;
  margin-bottom: 4px;
}

.big span {
  height: 15px;
}

.big .arrow {
  position: absolute;
  right: 5px;
  bottom: 14px;
}

.big.narrow .arrow {
  right: 2px;
}

.pointer {
  position: absolute;
  right: -3px;
  bottom: 2px;
  width: 12px;
  height: 20px;
}

.mini {
  display: flex;
  align-items: center;
  gap: 6px;
  width: 36px;
  height: 24px;
  padding-left: 2px;
}

.mini.plain {
  width: 24px;
}

.folded {
  display: flex;
  flex: none;
  flex-direction: column;
  align-items: center;
  width: 61px;
  margin: 1px 0;
  padding: 5px 0 4px;
  border-left: 2px solid #262c36;
  background: #4e5a6c;
  color: #e6e6e6;
  white-space: nowrap;
}

.folded svg {
  width: 32px;
  height: 32px;
}

.folded span {
  margin-top: 3px;
}

.folded .arrow {
  margin-top: auto;
}

/* drawing tabs */
.doc-tabs {
  display: flex;
  flex: none;
  gap: 1px;
  height: 27px;
  margin-top: 4px;
  padding: 2px 0 2px 7px;
  border-top: 1px solid #999;
  border-bottom: 2px solid #8d8d8d;
  background: #eef0ef;
  color: #222;
  font-family: 'Noto Sans CJK KR', sans-serif;
  font-size: 13px;
  white-space: nowrap;
  outline: 4px solid #3b4453;
}

.doc-grip {
  width: 5px;
  margin-right: 5px;
  border: solid #aaa;
  border-width: 0 1px;
}

.doc-tabs button {
  display: flex;
  flex: none;
  align-items: center;
  gap: 7px;
  padding: 0 7px;
  border-right: 2px solid #777;
}

.doc-tabs svg {
  height: 17px;
}

.doc-tabs span {
  margin-top: -2px;
}

.doc-tabs .active {
  font-size: 14px;
  font-weight: 700;
  background: #f6f6f6;
}

.doc-tabs .active,
.doc-tabs .changed {
  color: #0000e0;
}

/* workspace */
.work {
  display: flex;
  flex: 1 1 0;
  min-height: 0;
  margin-top: 4px;
  overflow: hidden;
}

.side {
  display: flex;
  flex: none;
  gap: 4px;
  width: 58px;
  padding-left: 1px;
  background: #3b4453;
  overflow: hidden;
}

.side-col {
  width: 24px;
  border: solid #262c36;
  border-width: 0 1px;
}

.toolbar {
  display: flex;
  flex-direction: column;
  align-items: center;
}

.toolbar + .toolbar {
  border-top: 1px solid #262c36;
}

.grip {
  flex: none;
  width: 14px;
  height: 3px;
  margin: 4px 0 3px;
  background:
    repeating-linear-gradient(transparent 0 1px, #3b4453 1px 2px),
    repeating-linear-gradient(90deg, #b8bcc4 0 1px, transparent 1px 2px);
}

.toolbar button {
  position: relative;
  flex: none;
  height: 22px;
  padding: 3px 0;
}

.toolbar button::after {
  content: '';
  position: absolute;
  right: 0;
  bottom: 3px;
  border: 2px solid #fff;
  border-top-color: transparent;
  border-left-color: transparent;
}

.toolbar hr {
  flex: none;
  width: 20px;
  height: 2px;
  margin: 2px 0;
  border: 0;
  background: #e4e4e4;
}

.model {
  position: relative;
  flex: 1;
  min-width: 0;
  background: #212830;
}

.drawing {
  width: 100%;
  height: 100%;
}

.view-label {
  position: absolute;
  top: 7px;
  left: 3px;
  color: #ddd;
  font-size: 13px;
}

.drawing path,
.drawing .plate,
.drawing .bubble {
  fill: none;
}

.drawing text {
  font-family: 'Liberation Sans', 'Noto Sans CJK KR', sans-serif;
  font-style: italic;
  text-anchor: middle;
}

.faint {
  stroke: #1b1f1c;
}

.grid {
  stroke: #00d800;
  stroke-width: 1.6;
}

.node {
  fill: #0f0;
}

.center {
  stroke: #d80000;
  stroke-width: 1.6;
}

.bubble {
  stroke: #00d800;
  stroke-width: 1.4;
}

.drawing .bubble-text {
  fill: #fff;
  font-size: 20px;
  stroke: #fff;
  stroke-width: 0.5;
}

.drawing .dim-big {
  fill: #fff;
  font-size: 15px;
  stroke: #fff;
  stroke-width: 0.3;
}

.dim {
  stroke: #858585;
  stroke-width: 1.4;
}

.dim-dot {
  fill: #858585;
}

.drawing .dim-text {
  fill: #0f0;
  font-size: 12px;
  font-weight: 700;
}

.plate {
  stroke: #12b4c4;
  stroke-width: 1.4;
}

.steel {
  stroke: #ddd;
}

.web {
  stroke: #8b908b;
}

.black {
  stroke: #000;
  stroke-width: 1.4;
}

.dash {
  stroke-dasharray: 6 2;
}

.bolt {
  fill: #fff;
  stroke: #2a9a3a;
}

.tag {
  stroke: #c800c8;
  stroke-width: 1.4;
}

.drawing .tag-text {
  font-size: 17px;
  stroke-width: 0.4;
}

.sc {
  fill: #00e8ff;
  stroke: #00e8ff;
}

.bp {
  fill: #e9967a;
  stroke: #e9967a;
}

.cross {
  stroke: #eee;
}

.drawing .cube {
  fill: #8d9299;
  font-size: 20px;
  font-style: normal;
  text-anchor: start;
}

/* command line */
.command {
  display: flex;
  flex: none;
  height: 86px;
  border: solid #3b4453;
  border-width: 4px 0 4px 2px;
}

.command-side {
  display: flex;
  flex: none;
  flex-direction: column;
  align-items: center;
  width: 24px;
  background: #2d2e39;
}

.command-side .grip {
  width: 17px;
  height: 5px;
  margin-bottom: 6px;
  background:
    repeating-linear-gradient(transparent 0 2px, #2d2e39 2px 3px),
    repeating-linear-gradient(90deg, #c8cad0 0 2px, transparent 2px 3px);
}

.command-side button {
  margin-bottom: 8px;
}

.command-main {
  display: flex;
  flex: 1;
  flex-direction: column;
  min-width: 0;
}

.history {
  flex: 1;
  padding: 8px 9px 0;
  border: 1px solid #777;
  border-width: 1px 0;
  background: #c6c8c7;
  color: #111;
  font-family: 'Liberation Mono', 'Noto Sans CJK KR', monospace;
  font-size: 13px;
  white-space: nowrap;
  overflow: hidden;
}

.history p {
  height: 15px;
  margin: 0;
}

.prompt {
  display: flex;
  align-items: center;
  gap: 4px;
  height: 20px;
  padding-left: 4px;
  background: #fff;
}

.prompt .arrow {
  border-top-color: #999;
}

.prompt input {
  flex: 1;
  min-width: 0;
  margin-left: 4px;
  outline: 0;
  color: #222;
  font-size: 14px;
}

.prompt input::placeholder {
  color: #8a8a8a;
  font-style: italic;
  opacity: 1;
}
</style>
